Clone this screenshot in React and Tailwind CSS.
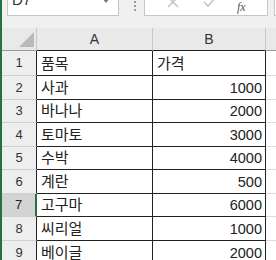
const rows = [
  { n: 1, name: '품목', price: '가격', h: 'h-[25px]', head: true },
  { n: 2, name: '사과', price: '1000', h: 'h-[24px]' },
  { n: 3, name: '바나나', price: '2000', h: 'h-[23px]' },
  { n: 4, name: '토마토', price: '3000', h: 'h-[24px]' },
  { n: 5, name: '수박', price: '4000', h: 'h-[23px]' },
  { n: 6, name: '계란', price: '500', h: 'h-[24px]' },
  { n: 7, name: '고구마', price: '6000', h: 'h-[23px]', selected: true },
  { n: 8, name: '씨리얼', price: '1000', h: 'h-[24px]' },
  { n: 9, name: '베이글', price: '2000', h: 'h-[24px]' },
];

const App = () => {
  return (
    <div className="w-[276px] h-[260px] overflow-hidden bg-white flex font-['Liberation_Sans','Noto_Sans_CJK_KR',sans-serif] text-[#222]">
      <div className="w-[2px] shrink-0 bg-[#217346]" />
      <div className="flex-1 flex flex-col min-w-0">
        {/* formula bar */}
        <div className="h-[28px] shrink-0 bg-[#f0f0f0] flex items-start">
          <div className="ml-[5px] w-[112px] h-[16px] bg-white border border-t-0 border-[#c6c6c6] overflow-hidden relative">
            <span className="block -mt-[9px] ml-[4px] text-[15px] leading-[18px] text-[#333]">D7</span>
            <span className="absolute right-[8px] -top-[2px] w-0 h-0 border-l-[4px] border-r-[4px] border-t-[5px] border-l-transparent border-r-transparent border-t-[#777]" />
          </div>
          <div className="ml-[14px] w-[4px] flex flex-col items-center gap-[2px] pt-[1px]">
            <span className="w-[2px] h-[2px] bg-[#999]" />
            <span className="w-[2px] h-[2px] bg-[#999]" />
            <span className="w-[2px] h-[2px] bg-[#999]" />
          </div>
          <div className="ml-[7px] w-[124px] h-[16px] bg-white border border-t-0 border-[#c6c6c6] overflow-hidden flex items-start">
            <svg className="ml-[22px] -mt-[4px]" width="12" height="12" viewBox="0 0 12 12">
              <path d="M1 1 L11 11 M11 1 L1 11" stroke="#c4c4c4" strokeWidth="1.5" fill="none" />
            </svg>
            <svg className="ml-[24px] -mt-[4px]" width="14" height="12" viewBox="0 0 14 12">
              <path d="M1 6 L5 10 L13 1" stroke="#c4c4c4" strokeWidth="1.6" fill="none" />
            </svg>
            <span className="ml-[20px] mt-[1px] italic font-['Liberation_Serif',serif] text-[12px] leading-[12px] text-[#555]">fx</span>
          </div>
          <div className="ml-[6px] flex-1 h-[16px] bg-white border border-t-0 border-r-0 border-[#c6c6c6]" />
        </div>

        {/* column headers */}
        <div className="h-[23px] shrink-0 flex bg-[#e9e9e9] text-[14px] text-[#333]">
          <div className="w-[35px] shrink-0 border-r border-b border-r-[#c8c8c8] border-b-[#9a9a9a] relative">
            <svg className="absolute right-[2px] bottom-[3px]" width="15" height="15" viewBox="0 0 15 15">
              <path d="M15 0 L15 15 L0 15 Z" fill="#b9b9b9" />
            </svg>
          </div>
          <div className="w-[116px] shrink-0 border-r border-b border-r-[#c8c8c8] border-b-[#222] flex items-center justify-center">A</div>
          <div className="w-[113px] shrink-0 border-r border-b border-r-[#c8c8c8] border-b-[#222] flex items-center justify-center">B</div>
          <div className="flex-1 border-b border-b-[#9a9a9a]" />
        </div>

        {/* rows */}
        {rows.map((r) => (
          <div key={r.n} className={`${r.h} shrink-0 flex text-[15px]`}>
            <div
              className={`w-[35px] shrink-0 flex items-center justify-center text-[13px] border-b border-b-[#d0d0d0] ${
                r.selected
                  ? 'bg-[#d3d3d3] border-r-2 border-r-[#217346] text-[#222]'
                  : 'bg-[#eeeeee] border-r border-r-[#222] text-[#333]'
              }`}
            >
              {r.n}
            </div>
            <div className="w-[116px] shrink-0 border-r border-b border-[#222] flex items-end pl-[4px] pb-[1px] leading-[20px] whitespace-nowrap">
              {r.name}
            </div>
            <div
              className={`w-[113px] shrink-0 border-r border-b border-[#222] flex items-end pb-[1px] leading-[20px] whitespace-nowrap ${
                r.head ? 'pl-[4px]' : 'justify-end pr-[3px] text-[14.5px]'
              }`}
            >
              {r.price}
            </div>
            <div className="flex-1 border-b border-b-[#dcdcdc]" />
          </div>
        ))}
      </div>
    </div>
  );
};

export default App;
